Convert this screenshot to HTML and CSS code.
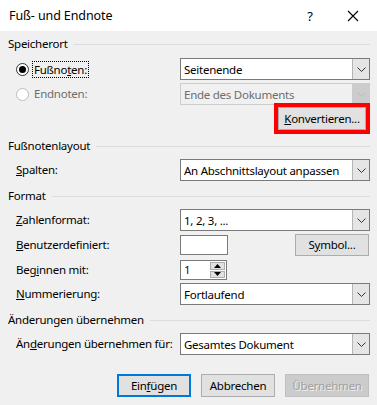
FILE: index.html
```html
<!DOCTYPE html>
<html lang="de">
<head>
<meta charset="utf-8">
<title>Fuß- und Endnote</title>
<link rel="stylesheet" href="styles.css">
</head>
<body>
<div class="dialog">
  <div class="titlebar">
    <span class="title">Fuß- und Endnote</span>
    <span class="help">?</span>
    <span class="close">
      <svg width="12" height="12" viewBox="0 0 12 12"><path d="M1 1 L11 11 M11 1 L1 11" stroke="#000" stroke-width="1.1" fill="none"/></svg>
    </span>
  </div>
  <div class="content">
    <div class="group-head h1"><span>Speicherort</span><span class="rule"></span></div>
    <div class="row r-fuss">
      <div class="label radio-label"><span class="radio checked"></span><span class="focus">Fußno<u>t</u>en:</span></div>
      <div class="select"><span class="val">Seitenende</span><span class="arrow"><svg width="9" height="5" viewBox="0 0 9 5"><path d="M0.5 0.5 L4.5 4.5 L8.5 0.5" stroke="#333" fill="none"/></svg></span></div>
    </div>
    <div class="row r-end">
      <div class="label radio-label disabled"><span class="radio"></span><span class="plain">Endnoten:</span></div>
      <div class="select disabled"><span class="val">Ende des Dokuments</span><span class="arrow"><svg width="9" height="5" viewBox="0 0 9 5"><path d="M0.5 0.5 L4.5 4.5 L8.5 0.5" stroke="#bcbcbc" fill="none"/></svg></span></div>
    </div>
    <div class="conv-row">
      <button class="btn conv"><u>K</u>onvertieren...</button>
    </div>
    <div class="group-head h2"><span>Fußnotenlayout</span><span class="rule"></span></div>
    <div class="row r-spalten">
      <div class="label"><u>S</u>palten:</div>
      <div class="select"><span class="val">An Abschnittslayout anpassen</span><span class="arrow"><svg width="9" height="5" viewBox="0 0 9 5"><path d="M0.5 0.5 L4.5 4.5 L8.5 0.5" stroke="#333" fill="none"/></svg></span></div>
    </div>
    <div class="group-head h3"><span>Format</span><span class="rule"></span></div>
    <div class="row r-zahl">
      <div class="label"><u>Z</u>ahlenformat:</div>
      <div class="select"><span class="val">1, 2, 3, ...</span><span class="arrow"><svg width="9" height="5" viewBox="0 0 9 5"><path d="M0.5 0.5 L4.5 4.5 L8.5 0.5" stroke="#333" fill="none"/></svg></span></div>
    </div>
    <div class="row r-benutzer">
      <div class="label"><u>B</u>enutzerdefiniert:</div>
      <div class="ctrl-split">
        <div class="textbox"></div>
        <button class="btn symbol">S<u>y</u>mbol...</button>
      </div>
    </div>
    <div class="row r-beginn">
      <div class="label">Beg<u>i</u>nnen mit:</div>
      <div class="spin">
        <span class="spin-val">1</span>
        <span class="spin-btns">
          <span class="spin-b"><svg width="7" height="4" viewBox="0 0 7 4"><path d="M0 4 L3.5 0 L7 4 Z" fill="#000"/></svg></span>
          <span class="spin-b"><svg width="7" height="4" viewBox="0 0 7 4"><path d="M0 0 L3.5 4 L7 0 Z" fill="#000"/></svg></span>
        </span>
      </div>
    </div>
    <div class="row r-numm">
      <div class="label"><u>N</u>ummerierung:</div>
      <div class="select"><span class="val">Fortlaufend</span><span class="arrow"><svg width="9" height="5" viewBox="0 0 9 5"><path d="M0.5 0.5 L4.5 4.5 L8.5 0.5" stroke="#333" fill="none"/></svg></span></div>
    </div>
    <div class="group-head h4"><span>Änderungen übernehmen</span><span class="rule"></span></div>
    <div class="row r-aend">
      <div class="label">Än<u>d</u>erungen übernehmen für:</div>
      <div class="select"><span class="val">Gesamtes Dokument</span><span class="arrow"><svg width="9" height="5" viewBox="0 0 9 5"><path d="M0.5 0.5 L4.5 4.5 L8.5 0.5" stroke="#333" fill="none"/></svg></span></div>
    </div>
    <div class="buttons">
      <button class="btn default">Ein<u>f</u>ügen</button>
      <button class="btn">Abbrechen</button>
      <button class="btn off">Übernehmen</button>
    </div>
  </div>
</div>
</body>
</html>
```
FILE: styles.css
```css
* { box-sizing: border-box; }
html, body { margin: 0; padding: 0; }
body {
  width: 377px;
  height: 405px;
  overflow: hidden;
  font-family: "Noto Sans", "Open Sans", sans-serif;
  font-size: 11.5px;
  letter-spacing: -0.25px;
  color: #000;
  background: #f0f0f0;
}
.dialog { width: 377px; height: 405px; display: flex; flex-direction: column; }
.titlebar {
  height: 31px;
  background: #fff;
  display: flex;
  align-items: center;
  padding-left: 9px;
  flex: none;
}
.title { font-size: 12.5px; letter-spacing: -0.1px; flex: 1; }
.help { width: 16px; text-align: center; margin-right: 29px; font-size: 13px; }
.close { width: 12px; height: 12px; margin-right: 18px; display: flex; }
.content {
  flex: 1;
  background: #f0f0f0;
  padding: 0 7px 0 8px;
  display: flex;
  flex-direction: column;
}
.group-head {
  height: 16px;
  display: flex;
  align-items: center;
  line-height: 16px;
  white-space: nowrap;
}
.group-head .rule { flex: 1; height: 1px; background: #dcdcdc; margin-left: 6px; }
.h1 { margin-top: 5px; }
.h2 { margin-top: 8px; }
.h3 { margin-top: 7px; }
.h4 { margin-top: 7px; }
.row {
  display: grid;
  grid-template-columns: 172px 190px;
  align-items: center;
  height: 22px;
}
.r-fuss { margin-top: 6px; }
.r-end { margin-top: 3px; }
.r-spalten { margin-top: 5px; }
.r-zahl { margin-top: 5px; }
.r-benutzer { margin-top: 3px; }
.r-beginn { margin-top: 4px; height: 20px; }
.r-numm { margin-top: 3px; }
.r-aend { margin-top: 5px; }
.label { padding-left: 8px; white-space: nowrap; line-height: 16px; }
.radio-label { display: flex; align-items: center; padding-left: 8px; }
.radio {
  width: 13px; height: 13px; border-radius: 50%;
  border: 1px solid #333; background: #fff;
  display: flex; align-items: center; justify-content: center;
  margin-right: 4px;
}
.radio.checked::after {
  content: ""; width: 7px; height: 7px; border-radius: 50%; background: #000;
}
.disabled .radio { border-color: #bcbcbc; }
.focus { outline: 1px dotted #000; padding: 0 1px; line-height: 15px; }
.plain { padding: 0 1px; color: #6d6d6d; }
.select {
  height: 22px;
  width: 190px;
  border: 1px solid #7a7a7a;
  background: #fff;
  display: flex;
  align-items: center;
}
.select .val { flex: 1; padding-left: 3px; white-space: nowrap; overflow: hidden; }
.select .arrow {
  width: 17px; height: 20px;
  background: #e5e5e5;
  border-left: 1px solid #b5b5b5;
  display: flex; align-items: center; justify-content: center;
}
.select.disabled { border-color: #cccccc; background: #f0f0f0; }
.select.disabled .val { color: #6d6d6d; }
.select.disabled .arrow { background: #cccccc; border-left-color: #cccccc; }
.conv-row { display: flex; justify-content: flex-end; margin-top: 2px; padding-right: 4px; }
.btn {
  font-family: inherit;
  font-size: 11.5px;
  letter-spacing: -0.25px;
  color: #000;
  background: #e1e1e1;
  border: 1px solid #adadad;
  height: 23px;
  padding: 0;
  margin: 0;
  line-height: 16px;
}
.conv { width: 88px; outline: 4px solid #ff0000; }
.ctrl-split { display: flex; align-items: center; justify-content: space-between; width: 189px; }
.textbox { width: 48px; height: 20px; border: 1px solid #7a7a7a; background: #fff; }
.symbol { width: 74px; height: 22px; }
.spin { width: 47px; height: 20px; border: 1px solid #7a7a7a; background: #fff; display: flex; }
.spin-val { flex: 1; padding-left: 3px; line-height: 18px; color: #2a0040; }
.spin-btns { width: 16px; display: flex; flex-direction: column; padding: 1px 1px 1px 0; gap: 1px; }
.spin-b { flex: 1; background: #e1e1e1; border: 1px solid #adadad; display: flex; align-items: center; justify-content: center; }
.buttons { display: flex; justify-content: flex-end; gap: 10px; margin-top: 19px; padding-right: 1px; }
.buttons .btn { width: 74px; }
.buttons .default { border: 2px solid #0078d7; }
.buttons .off { width: 84px; background: #cccccc; border-color: #bfbfbf; color: #a0a0a0; text-shadow: 1px 1px 0 #f0f0f0; }
```
